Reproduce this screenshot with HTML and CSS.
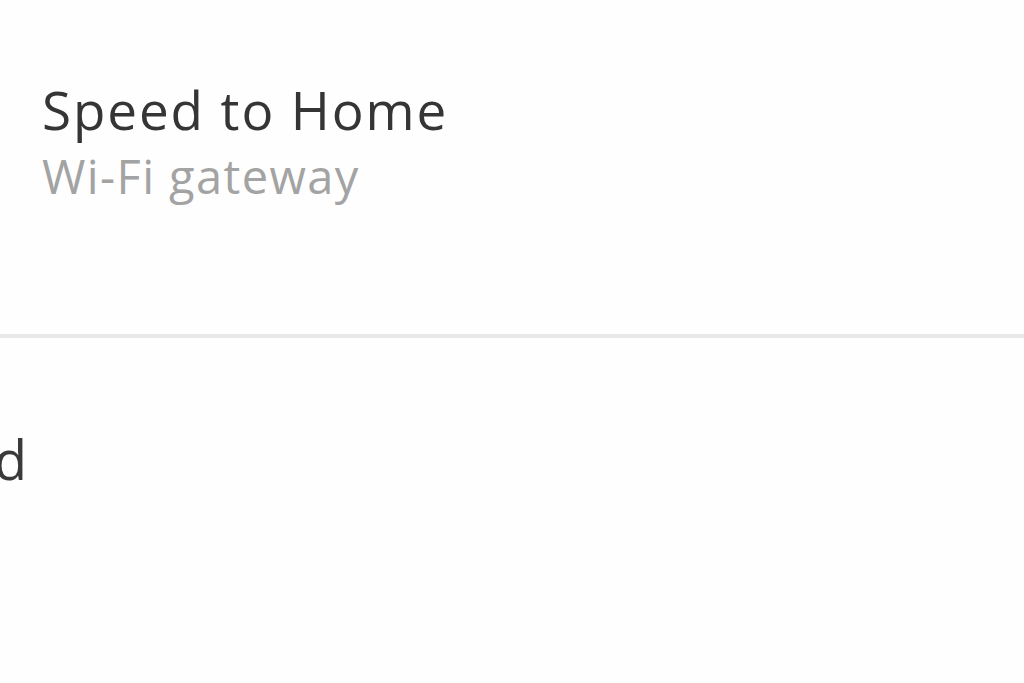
FILE: index.html
```html
<!DOCTYPE html>
<html lang="en">
<head>
    <meta charset="UTF-8">
    <meta name="viewport" content="width=device-width, initial-scale=1.0">
    <title>Speed to Home</title>
    <link rel="stylesheet" href="styles.css">
</head>
<body>
    <div class="device-card">
        <div class="device-name">Speed to Home</div>
        <div class="device-type">Wi-Fi gateway</div>
    </div>
    <div class="divider"></div>
    <div class="status-row">
        <span class="status-label">d</span>
    </div>
</body>
</html>
```

FILE: styles.css
```css
body {
    margin: 0;
    background-color: #fefefe;
    font-family: "Open Sans", "Noto Sans", sans-serif;
    overflow: hidden;
}
.device-card {
    padding: 70px 0 0 42px;
    height: 264px;
    box-sizing: border-box;
}
.device-name {
    font-size: 53px;
    line-height: 80px;
    color: #353535;
    letter-spacing: 1.9px;
}
.device-type {
    font-size: 47px;
    line-height: 52px;
    color: #a3a3a3;
    letter-spacing: 1.4px;
}
.divider {
    height: 4px;
    background-color: #e8e8e8;
    margin-top: 70px;
}
.status-row {
    padding-top: 86px;
}
.status-label {
    display: block;
    margin-left: -6px;
    font-size: 54px;
    line-height: 70px;
    color: #3a3a3a;
}
```
